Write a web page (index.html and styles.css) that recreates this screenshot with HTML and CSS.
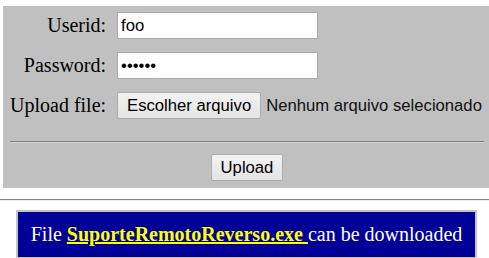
FILE: index.html
```html
<!DOCTYPE html>
<html lang="pt">
<head>
    <meta charset="UTF-8">
    <title>Upload</title>
    <link rel="stylesheet" href="styles.css">
</head>
<body>

<form class="upload-panel">
    <div class="fields">
        <label class="field-label" for="userid">Userid:</label>
        <input class="text-input" type="text" id="userid" value="foo">

        <label class="field-label" for="password">Password:</label>
        <input class="text-input" type="password" id="password" value="abcdef">

        <label class="field-label">Upload file:</label>
        <div class="file-picker">
            <button type="button" class="btn">Escolher arquivo</button>
            <span class="file-name">Nenhum arquivo selecionado</span>
        </div>
    </div>

    <div class="panel-rule"></div>

    <div class="submit-row">
        <button type="button" class="btn">Upload</button>
    </div>
</form>

<div class="page-rule"></div>

<div class="notice">
    File <a href="#" class="download-link">SuporteRemotoReverso.exe </a> can be downloaded
</div>

</body>
</html>
```

FILE: styles.css
```css
body {
    margin: 0;
    overflow: hidden;
    font-family: "Liberation Serif", "Times New Roman", serif;
    font-size: 20px;
    color: #000;
}

.upload-panel {
    margin: 6px 0 0 3px;
    background-color: #c0c0c0;
    padding: 6px 5px 7px 7px;
}

.fields {
    display: grid;
    grid-template-columns: auto 1fr;
    column-gap: 11px;
    row-gap: 13px;
    align-items: center;
}
.field-label {
    justify-self: end;
    white-space: nowrap;
}

.text-input {
    box-sizing: border-box;
    width: 201px;
    height: 27px;
    margin: 0;
    padding: 1px 3px;
    border: 1px solid #a9a9a9;
    background: #fff;
    font-family: "Liberation Sans", Arial, sans-serif;
    font-size: 16.67px;
    color: #000;
}

.file-picker {
    display: flex;
    align-items: center;
    gap: 5px;
    white-space: nowrap;
}
.file-name {
    font-family: "Liberation Sans", Arial, sans-serif;
    font-size: 16.67px;
    color: #101010;
}

.btn {
    box-sizing: border-box;
    height: 27px;
    margin: 0;
    padding: 0 9px;
    border: 1px solid #acacac;
    border-radius: 2px;
    background: linear-gradient(#f2f2f2, #e4e4e4);
    font-family: "Liberation Sans", Arial, sans-serif;
    font-size: 16.67px;
    color: #000;
}

.panel-rule {
    margin-top: 22px;
    border-top: 1px solid #808080;
    border-bottom: 1px solid #d4d4d4;
}

.submit-row {
    display: flex;
    justify-content: center;
    margin-top: 11px;
}

.page-rule {
    margin-top: 11px;
    border-top: 1px solid #808080;
    border-bottom: 1px solid #f0f0f0;
}

.notice {
    box-sizing: border-box;
    width: 461px;
    margin: 9px 0 0 16px;
    padding: 11px 0;
    border: 2px solid #c4c4c4;
    background-color: #000099;
    color: #fff;
    text-align: center;
    white-space: nowrap;
}
.download-link {
    color: #ffff00;
    font-weight: bold;
}
```
